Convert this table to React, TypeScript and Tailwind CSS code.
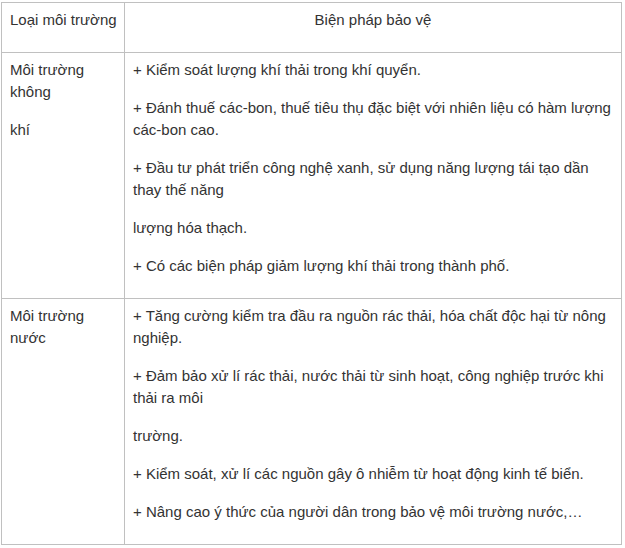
const rows = [
  {
    type: ["Môi trường không", "khí"],
    items: [
      "+ Kiểm soát lượng khí thải trong khí quyển.",
      "+ Đánh thuế các-bon, thuế tiêu thụ đặc biệt với nhiên liệu có hàm lượng các-bon cao.",
      "+ Đầu tư phát triển công nghệ xanh, sử dụng năng lượng tái tạo dần thay thế năng",
      "lượng hóa thạch.",
      "+ Có các biện pháp giảm lượng khí thải trong thành phố.",
    ],
  },
  {
    type: ["Môi trường nước"],
    items: [
      "+ Tăng cường kiểm tra đầu ra nguồn rác thải, hóa chất độc hại từ nông nghiệp.",
      "+ Đảm bảo xử lí rác thải, nước thải từ sinh hoạt, công nghiệp trước khi thải ra môi",
      "trường.",
      "+ Kiểm soát, xử lí các nguồn gây ô nhiễm từ hoạt động kinh tế biển.",
      "+ Nâng cao ý thức của người dân trong bảo vệ môi trường nước,…",
    ],
  },
];

export default function App() {
  return (
    <div className="min-h-screen bg-white pt-[2px] pl-px font-['Liberation_Sans',Arial,sans-serif] text-[15px] leading-[22px] text-[#333]">
      <table className="w-[621px] border-collapse table-fixed">
        <colgroup>
          <col className="w-[123px]" />
          <col />
        </colgroup>
        <thead>
          <tr>
            <th className="border border-[#c0c0c0] px-2 pt-[6px] pb-[5px] text-left align-top font-normal">
              <p className="mb-4 whitespace-nowrap">Loại môi trường</p>
            </th>
            <th className="border border-[#c0c0c0] px-2 pt-[6px] pb-[5px] text-center align-top font-normal">
              <p className="mb-4">Biện pháp bảo vệ</p>
            </th>
          </tr>
        </thead>
        <tbody>
          {rows.map((row, i) => (
            <tr key={i}>
              <td className="border border-[#c0c0c0] px-2 pt-[6px] pb-[5px] align-top">
                {row.type.map((t, j) => (
                  <p key={j} className="mb-4">{t}</p>
                ))}
              </td>
              <td className="border border-[#c0c0c0] px-2 pt-[6px] pb-[5px] align-top">
                {row.items.map((t, j) => (
                  <p key={j} className="mb-4">{t}</p>
                ))}
              </td>
            </tr>
          ))}
        </tbody>
      </table>
    </div>
  );
}
